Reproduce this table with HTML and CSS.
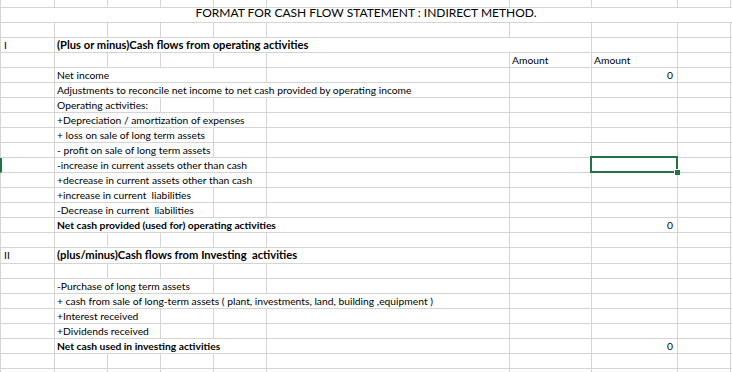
FILE: index.html
```html
<!DOCTYPE html>
<html lang="en">
<head>
<meta charset="utf-8">
<title>Format for cash flow statement</title>
<link rel="stylesheet" href="styles.css">
</head>
<body>
<div class="sheet">
  <div class="row">
    <div class="c a"></div><div class="c"></div><div class="c"></div><div class="c"></div><div class="c"></div><div class="c"></div><div class="c"></div><div class="c"></div><div class="c"></div><div class="c"></div>
  </div>
  <div class="row">
    <div class="c a s10 title">FORMAT FOR CASH FLOW STATEMENT : INDIRECT METHOD.</div>
  </div>
  <div class="row">
    <div class="c a"></div><div class="c"></div><div class="c"></div><div class="c"></div><div class="c"></div><div class="c"></div><div class="c"></div><div class="c"></div><div class="c"></div><div class="c"></div>
  </div>
  <div class="row">
    <div class="c a">I</div><div class="c s6 b h">(Plus or minus)Cash flows from operating activities</div><div class="c"></div><div class="c"></div><div class="c"></div>
  </div>
  <div class="row">
    <div class="c a"></div><div class="c"></div><div class="c"></div><div class="c"></div><div class="c"></div><div class="c"></div><div class="c">Amount</div><div class="c">Amount</div><div class="c"></div><div class="c"></div>
  </div>
  <div class="row">
    <div class="c a"></div><div class="c s4">Net income</div><div class="c"></div><div class="c"></div><div class="c num">0</div><div class="c"></div><div class="c"></div>
  </div>
  <div class="row">
    <div class="c a"></div><div class="c s5">Adjustments to reconcile net income to net cash provided by operating income</div><div class="c"></div><div class="c"></div><div class="c"></div><div class="c"></div>
  </div>
  <div class="row">
    <div class="c a"></div><div class="c s2">Operating activities:</div><div class="c"></div><div class="c"></div><div class="c"></div><div class="c"></div><div class="c"></div><div class="c"></div><div class="c"></div>
  </div>
  <div class="row">
    <div class="c a"></div><div class="c s4">+Depreciation / amortization of expenses</div><div class="c"></div><div class="c"></div><div class="c"></div><div class="c"></div><div class="c"></div>
  </div>
  <div class="row">
    <div class="c a"></div><div class="c s3">+ loss on sale of long term assets</div><div class="c"></div><div class="c"></div><div class="c"></div><div class="c"></div><div class="c"></div><div class="c"></div>
  </div>
  <div class="row">
    <div class="c a"></div><div class="c s3">- profit on sale of long term assets</div><div class="c"></div><div class="c"></div><div class="c"></div><div class="c"></div><div class="c"></div><div class="c"></div>
  </div>
  <div class="row">
    <div class="c a sel-row"></div><div class="c s4">-increase in current assets other than cash</div><div class="c"></div><div class="c"></div><div class="c active"><span class="handle"></span></div><div class="c"></div><div class="c"></div>
  </div>
  <div class="row">
    <div class="c a"></div><div class="c s4">+decrease in current assets other than cash</div><div class="c"></div><div class="c"></div><div class="c"></div><div class="c"></div><div class="c"></div>
  </div>
  <div class="row">
    <div class="c a"></div><div class="c s3">+increase in current&nbsp; liabilities</div><div class="c"></div><div class="c"></div><div class="c"></div><div class="c"></div><div class="c"></div><div class="c"></div>
  </div>
  <div class="row">
    <div class="c a"></div><div class="c s3">-Decrease in current&nbsp; liabilities</div><div class="c"></div><div class="c"></div><div class="c"></div><div class="c"></div><div class="c"></div><div class="c"></div>
  </div>
  <div class="row">
    <div class="c a"></div><div class="c s5 b">Net cash provided (used for) operating activities</div><div class="c"></div><div class="c num">0</div><div class="c"></div><div class="c"></div>
  </div>
  <div class="row">
    <div class="c a"></div><div class="c"></div><div class="c"></div><div class="c"></div><div class="c"></div><div class="c"></div><div class="c"></div><div class="c"></div><div class="c"></div><div class="c"></div>
  </div>
  <div class="row">
    <div class="c a">II</div><div class="c s5 b h">(plus/minus)Cash flows from Investing&nbsp; activities</div><div class="c"></div><div class="c"></div><div class="c"></div><div class="c"></div>
  </div>
  <div class="row">
    <div class="c a"></div><div class="c"></div><div class="c"></div><div class="c"></div><div class="c"></div><div class="c"></div><div class="c"></div><div class="c"></div><div class="c"></div><div class="c"></div>
  </div>
  <div class="row">
    <div class="c a"></div><div class="c s3">-Purchase of long term assets</div><div class="c"></div><div class="c"></div><div class="c"></div><div class="c"></div><div class="c"></div><div class="c"></div>
  </div>
  <div class="row">
    <div class="c a"></div><div class="c s5">+ cash from sale of long-term assets ( plant, investments, land, building ,equipment )</div><div class="c"></div><div class="c"></div><div class="c"></div><div class="c"></div>
  </div>
  <div class="row">
    <div class="c a"></div><div class="c s2">+Interest received</div><div class="c"></div><div class="c"></div><div class="c"></div><div class="c"></div><div class="c"></div><div class="c"></div><div class="c"></div>
  </div>
  <div class="row">
    <div class="c a"></div><div class="c s2">+Dividends received</div><div class="c"></div><div class="c"></div><div class="c"></div><div class="c"></div><div class="c"></div><div class="c"></div><div class="c"></div>
  </div>
  <div class="row">
    <div class="c a"></div><div class="c s4 b">Net cash used in investing activities</div><div class="c"></div><div class="c"></div><div class="c num">0</div><div class="c"></div><div class="c"></div>
  </div>
  <div class="row">
    <div class="c a"></div><div class="c"></div><div class="c"></div><div class="c"></div><div class="c"></div><div class="c"></div><div class="c"></div><div class="c"></div><div class="c"></div><div class="c"></div>
  </div>
  <div class="row">
    <div class="c a"></div><div class="c"></div><div class="c"></div><div class="c"></div><div class="c"></div><div class="c"></div><div class="c"></div><div class="c"></div><div class="c"></div><div class="c"></div>
  </div>
</div>
</body>
</html>
```
FILE: styles.css
```css
html, body {
  margin: 0;
  padding: 0;
  background: #ffffff;
  overflow: hidden;
}

.sheet {
  display: grid;
  grid-template-columns: 55px 53px 53px 53px 53px 243px 82px 86px 53px 1fr;
  grid-template-rows: 8px repeat(16, 15px) 16px repeat(8, 15px);
  width: 732px;
  height: 372px;
  overflow: hidden;
  font-family: Lato, "Liberation Sans", sans-serif;
  font-size: 10.3px;
  color: #000000;
}

.row {
  display: contents;
}

.c {
  box-sizing: border-box;
  border-right: 1px solid #d4d4d4;
  border-bottom: 1px solid #d4d4d4;
  padding: 0 2px;
  line-height: 14px;
  white-space: nowrap;
  overflow: visible;
  position: relative;
  min-width: 0;
}

.a {
  border-left: 1px solid #d4d4d4;
  padding-left: 3px;
}

.sel-row {
  border-left: 2px solid #217346;
}

.s2 { grid-column: span 2; }
.s3 { grid-column: span 3; }
.s4 { grid-column: span 4; }
.s5 { grid-column: span 5; }
.s6 { grid-column: span 6; }
.s10 { grid-column: span 10; border-right: none; }

.b {
  font-weight: 700;
}

.h {
  font-size: 11.2px;
}

.title {
  text-align: center;
  font-size: 12px;
  line-height: 10px;
  padding-right: 8px;
}

.num {
  text-align: right;
  padding-right: 4px;
}

.active::before {
  content: "";
  position: absolute;
  left: -2px;
  top: -2px;
  right: -1px;
  bottom: -1px;
  border: 2px solid #217346;
}

.handle {
  position: absolute;
  right: -3px;
  bottom: -3px;
  width: 5px;
  height: 5px;
  background: #217346;
  box-shadow: -1px -1px 0 #ffffff;
  z-index: 1;
}
```
